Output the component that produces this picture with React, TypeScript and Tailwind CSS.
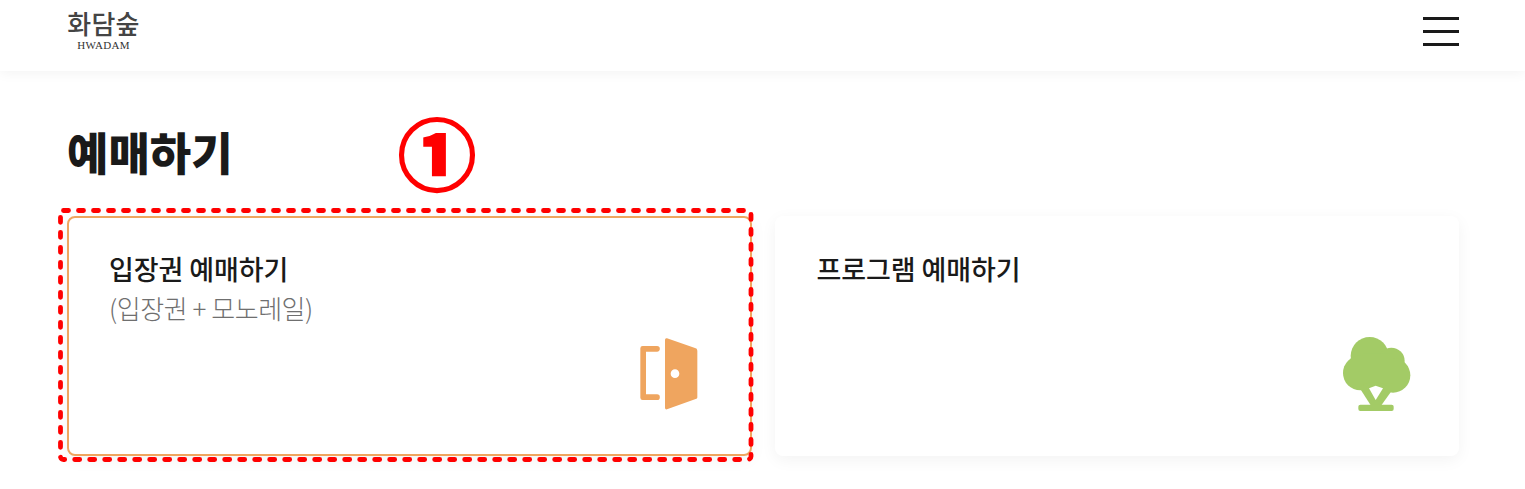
const kr = "font-['Noto_Sans_CJK_KR','Noto_Sans',sans-serif]";

function DoorIcon() {
  return (
    <svg width="58" height="73" viewBox="0 0 174 219" className="mr-[52px] mb-[43px] self-end" fill="#EFA55F">
      <path d="M51 24H8a7 7 0 0 0-7 7v148a7 7 0 0 0 7 7h43a8.500 8.500 0 0 0 0-17H18V41h33a8.500 8.500 0 0 0 0-17z" />
      <path fillRule="evenodd" d="M75 6a5 5 0 0 1 6-5l84 29a8 8 0 0 1 7 8v138a6 6 0 0 1-5 7l-86 31a5 5 0 0 1-6-5zM105 94a13 13 0 1 0 0 26 13 13 0 0 0 0-26z" />
    </svg>
  );
}

function TreeIcon() {
  return (
    <svg width="68" height="74" viewBox="70 50 204 222" className="mr-[48px] mb-[45px] self-end" fill="#A3CB66">
      <circle cx="150" cy="107" r="57" />
      <circle cx="215" cy="122" r="40" />
      <circle cx="122" cy="158" r="52" />
      <circle cx="220" cy="165" r="52" />
      <rect x="130" y="100" width="90" height="90" />
      <path d="M118 200l36 56h30l36-50-40-20h-30z" />
      <rect x="116" y="253" width="106" height="19" rx="6" />
      <path d="M148 204l20-8 22 8-22 35z" fill="#fff" />
    </svg>
  );
}

function Card({ title, sub, icon, active }: { title: string; sub?: string; icon: React.ReactNode; active?: boolean }) {
  return (
    <div className={`flex h-[240px] flex-col justify-between rounded-lg bg-white shadow-[0_4px_16px_rgba(0,0,0,0.05)] ${active ? 'border-2 border-[#EFA55F]' : ''}`}>
      <div className={active ? 'pl-[40px] pt-[32px]' : 'pl-[42px] pt-[34px]'}>
        <div className="text-[27px] leading-[38px] font-medium tracking-[-0.1px] text-[#1a1a1a]">{title}</div>
        {sub && <div className="text-[26px] leading-[40px] font-light tracking-[-0.45px] text-[#6f6f6f]">{sub}</div>}
      </div>
      {icon}
    </div>
  );
}

export default function App() {
  return (
    <div className={`relative min-h-[489px] overflow-hidden bg-white ${kr}`}>
      <header className="flex h-[71px] items-start justify-between bg-white pl-[67px] pr-[66px] shadow-[0_2px_12px_rgba(0,0,0,0.05)]">
        <div className="flex w-[73px] flex-col items-center pt-[7px]">
          <span className="text-[26px] leading-[32px] font-medium tracking-[0.2px] whitespace-nowrap text-[#444]">화담숲</span>
          <span className="font-['Liberation_Serif',serif] text-[11px] leading-[12px] tracking-[0.3px] whitespace-nowrap text-[#333]">HWADAM</span>
        </div>
        <div className="mt-[17px] flex w-9 flex-col gap-[10px]">
          <span className="h-[3px] bg-[#1a1a1a]" />
          <span className="h-[3px] bg-[#1a1a1a]" />
          <span className="h-[3px] bg-[#1a1a1a]" />
        </div>
      </header>

      <main className="px-[66px] pl-[67px]">
        <h1 className="mt-[48px] text-[45px] leading-[66px] font-black text-[#1a1a1a]">예매하기</h1>
        <div className="mt-[31px] grid grid-cols-2 gap-[23px]">
          <div className="relative">
            <Card title="입장권 예매하기" sub="(입장권 + 모노레일)" icon={<DoorIcon />} active />
            {/* red marker drawn over the screenshot */}
            <svg className="absolute top-[-8px] left-[-9px]" width="696" height="254" fill="none">
              <rect x="2.500" y="2.500" width="690.500" height="249" rx="3" stroke="#FF0000" strokeWidth="4.800" strokeDasharray="5 10" strokeLinecap="round" />
            </svg>
          </div>
          <Card title="프로그램 예매하기" icon={<TreeIcon />} />
        </div>
      </main>

      <div className="absolute top-[111px] left-[398px] text-[78px] leading-[80px] font-black text-[#FF0000] [-webkit-text-stroke:2px_#FF0000]">①</div>
    </div>
  );
}
